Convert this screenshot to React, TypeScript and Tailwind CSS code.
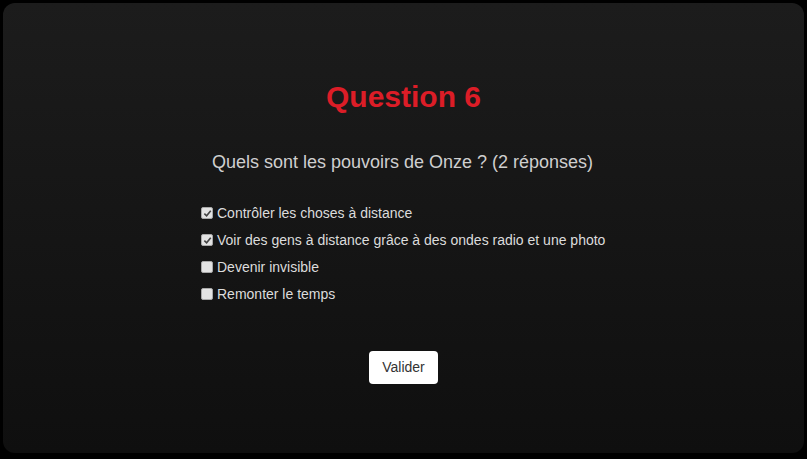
import React, { useState } from "react";

const options = [
  { label: "Contrôler les choses à distance", checked: true },
  { label: "Voir des gens à distance grâce à des ondes radio et une photo", checked: true },
  { label: "Devenir invisible", checked: false },
  { label: "Remonter le temps", checked: false },
];

const Box: React.FC<{ checked: boolean }> = ({ checked }) => (
  <span className="w-[12px] h-[12px] mr-[4px] rounded-[2px] bg-[#e3e3e3] border border-[#a8a8a8] flex items-center justify-center shrink-0">
    {checked ? (
      <svg width="9" height="9" viewBox="0 0 10 10">
        <path d="M1.5 5.2 L4 7.6 L8.6 2" fill="none" stroke="#444" strokeWidth="1.8" />
      </svg>
    ) : null}
  </span>
);

const App: React.FC = () => {
  const [answers] = useState(options);

  return (
    <div className="w-[807px] h-[459px] bg-black p-[3px] pb-[6px] font-['Liberation_Sans',Arial,sans-serif]">
      <div className="h-full rounded-[12px] bg-gradient-to-b from-[#1c1c1c] to-[#0f0f0f] flex flex-col items-center pt-[76px]">
        <h1 className="text-[30px] leading-[36px] font-bold text-[#dc1d27]">Question 6</h1>
        <p className="mt-[36px] text-[18px] leading-[22px] text-[#cfcfcf] pr-[2px]">
          Quels sont les pouvoirs de Onze ? (2 réponses)
        </p>
        <div className="mt-[32px] flex flex-col gap-[11px] self-start ml-[198px]">
          {answers.map((o) => (
            <label key={o.label} className="flex items-center text-[14px] leading-[16px] text-[#dcdcdc]">
              <Box checked={o.checked} />
              {o.label}
            </label>
          ))}
        </div>
        <button className="mt-[49px] bg-white text-[#333] text-[14px] rounded-[4px] w-[69px] h-[33px]">
          Valider
        </button>
      </div>
    </div>
  );
};

export default App;
